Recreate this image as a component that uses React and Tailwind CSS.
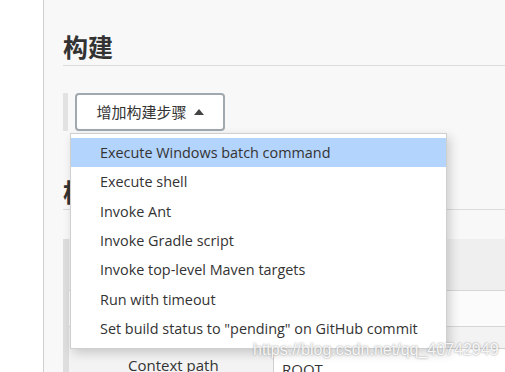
import React from 'react'

const items = [
  'Execute Windows batch command',
  'Execute shell',
  'Invoke Ant',
  'Invoke Gradle script',
  'Invoke top-level Maven targets',
  'Run with timeout',
  'Set build status to "pending" on GitHub commit',
]

function Caret() {
  return (
    <svg width="10" height="6" viewBox="0 0 10 6" className="ml-[7px]">
      <path d="M0 6 L5 0 L10 6 Z" fill="#444" />
    </svg>
  )
}

export default function App() {
  return (
    <div className="relative flex h-[372px] w-[505px] overflow-hidden font-['Open_Sans','Noto_Sans_CJK_SC',sans-serif] text-[#333]">
      {/* left sidebar strip */}
      <div className="w-[44px] shrink-0 border-r border-[#d0d0d0] bg-white" />

      {/* main area */}
      <div className="flex-1 bg-[#f8f8f8] pl-[19px] pt-[30px]">
        <h2 className="border-b border-[#dcdcdc] pb-[3px] text-[25px] font-bold leading-[32px] text-[#333] font-['Noto_Sans_CJK_SC',sans-serif]">
          构建
        </h2>

        <div className="mt-[27px] flex h-[38px]">
          <div className="w-[5px] bg-[#e2e2e2]" />
          <button className="ml-[7px] flex h-[38px] w-[150px] items-center justify-center rounded-[4px] border-2 border-[#a0a8b0] bg-white text-[15px] text-[#333] font-['Noto_Sans_CJK_SC',sans-serif]">
            增加构建步骤
            <Caret />
          </button>
        </div>

        <h2 className="mt-[44px] border-b border-[#dcdcdc] pb-[2px] text-[25px] font-bold leading-[32px] text-[#333] font-['Noto_Sans_CJK_SC',sans-serif]">
          构建环境
        </h2>

        <div className="mt-[29px] flex h-[140px]">
          <div className="w-[6px] bg-[#dedede]" />
          <div className="flex flex-1 flex-col">
            <div className="h-[54px] border-b border-[#d6d6d6] bg-[#efefef]" />
            <div className="h-[38px] border-b border-[#d6d6d6] bg-[#fbfbfb]" />
            <div className="flex flex-1 bg-[#f3f3f3]">
              <div className="w-[204px] pt-[28px] pl-[59px] text-[15px] leading-[20px]">Context path</div>
              <div className="mt-[21px] flex-1 border-l border-t border-[#cfcfcf] bg-white pl-[8px] pt-[10px] text-[15px] leading-[20px]">
                ROOT
              </div>
            </div>
          </div>
        </div>
      </div>

      {/* dropdown menu */}
      <div className="absolute left-[70px] top-[133px] w-[377px] border border-[#cfcfcf] bg-white pt-[4px] pb-[4px] shadow-[3px_4px_10px_rgba(0,0,0,0.18)]">
        {items.map((t, i) => (
          <div
            key={t}
            className={`flex h-[29.4px] items-center pl-[29px] text-[14.4px] text-[#333] ${i === 0 ? 'bg-[#b3d4fc]' : ''}`}
          >
            {t}
          </div>
        ))}
      </div>

      {/* watermark */}
      <div className="absolute left-[253px] top-[340px] text-[16px] leading-[20px] text-white/90 font-['Liberation_Sans',sans-serif] [text-shadow:0_0_2px_rgba(120,120,120,0.9)]">
        https://blog.csdn.net/qq_40742949
      </div>
    </div>
  )
}
